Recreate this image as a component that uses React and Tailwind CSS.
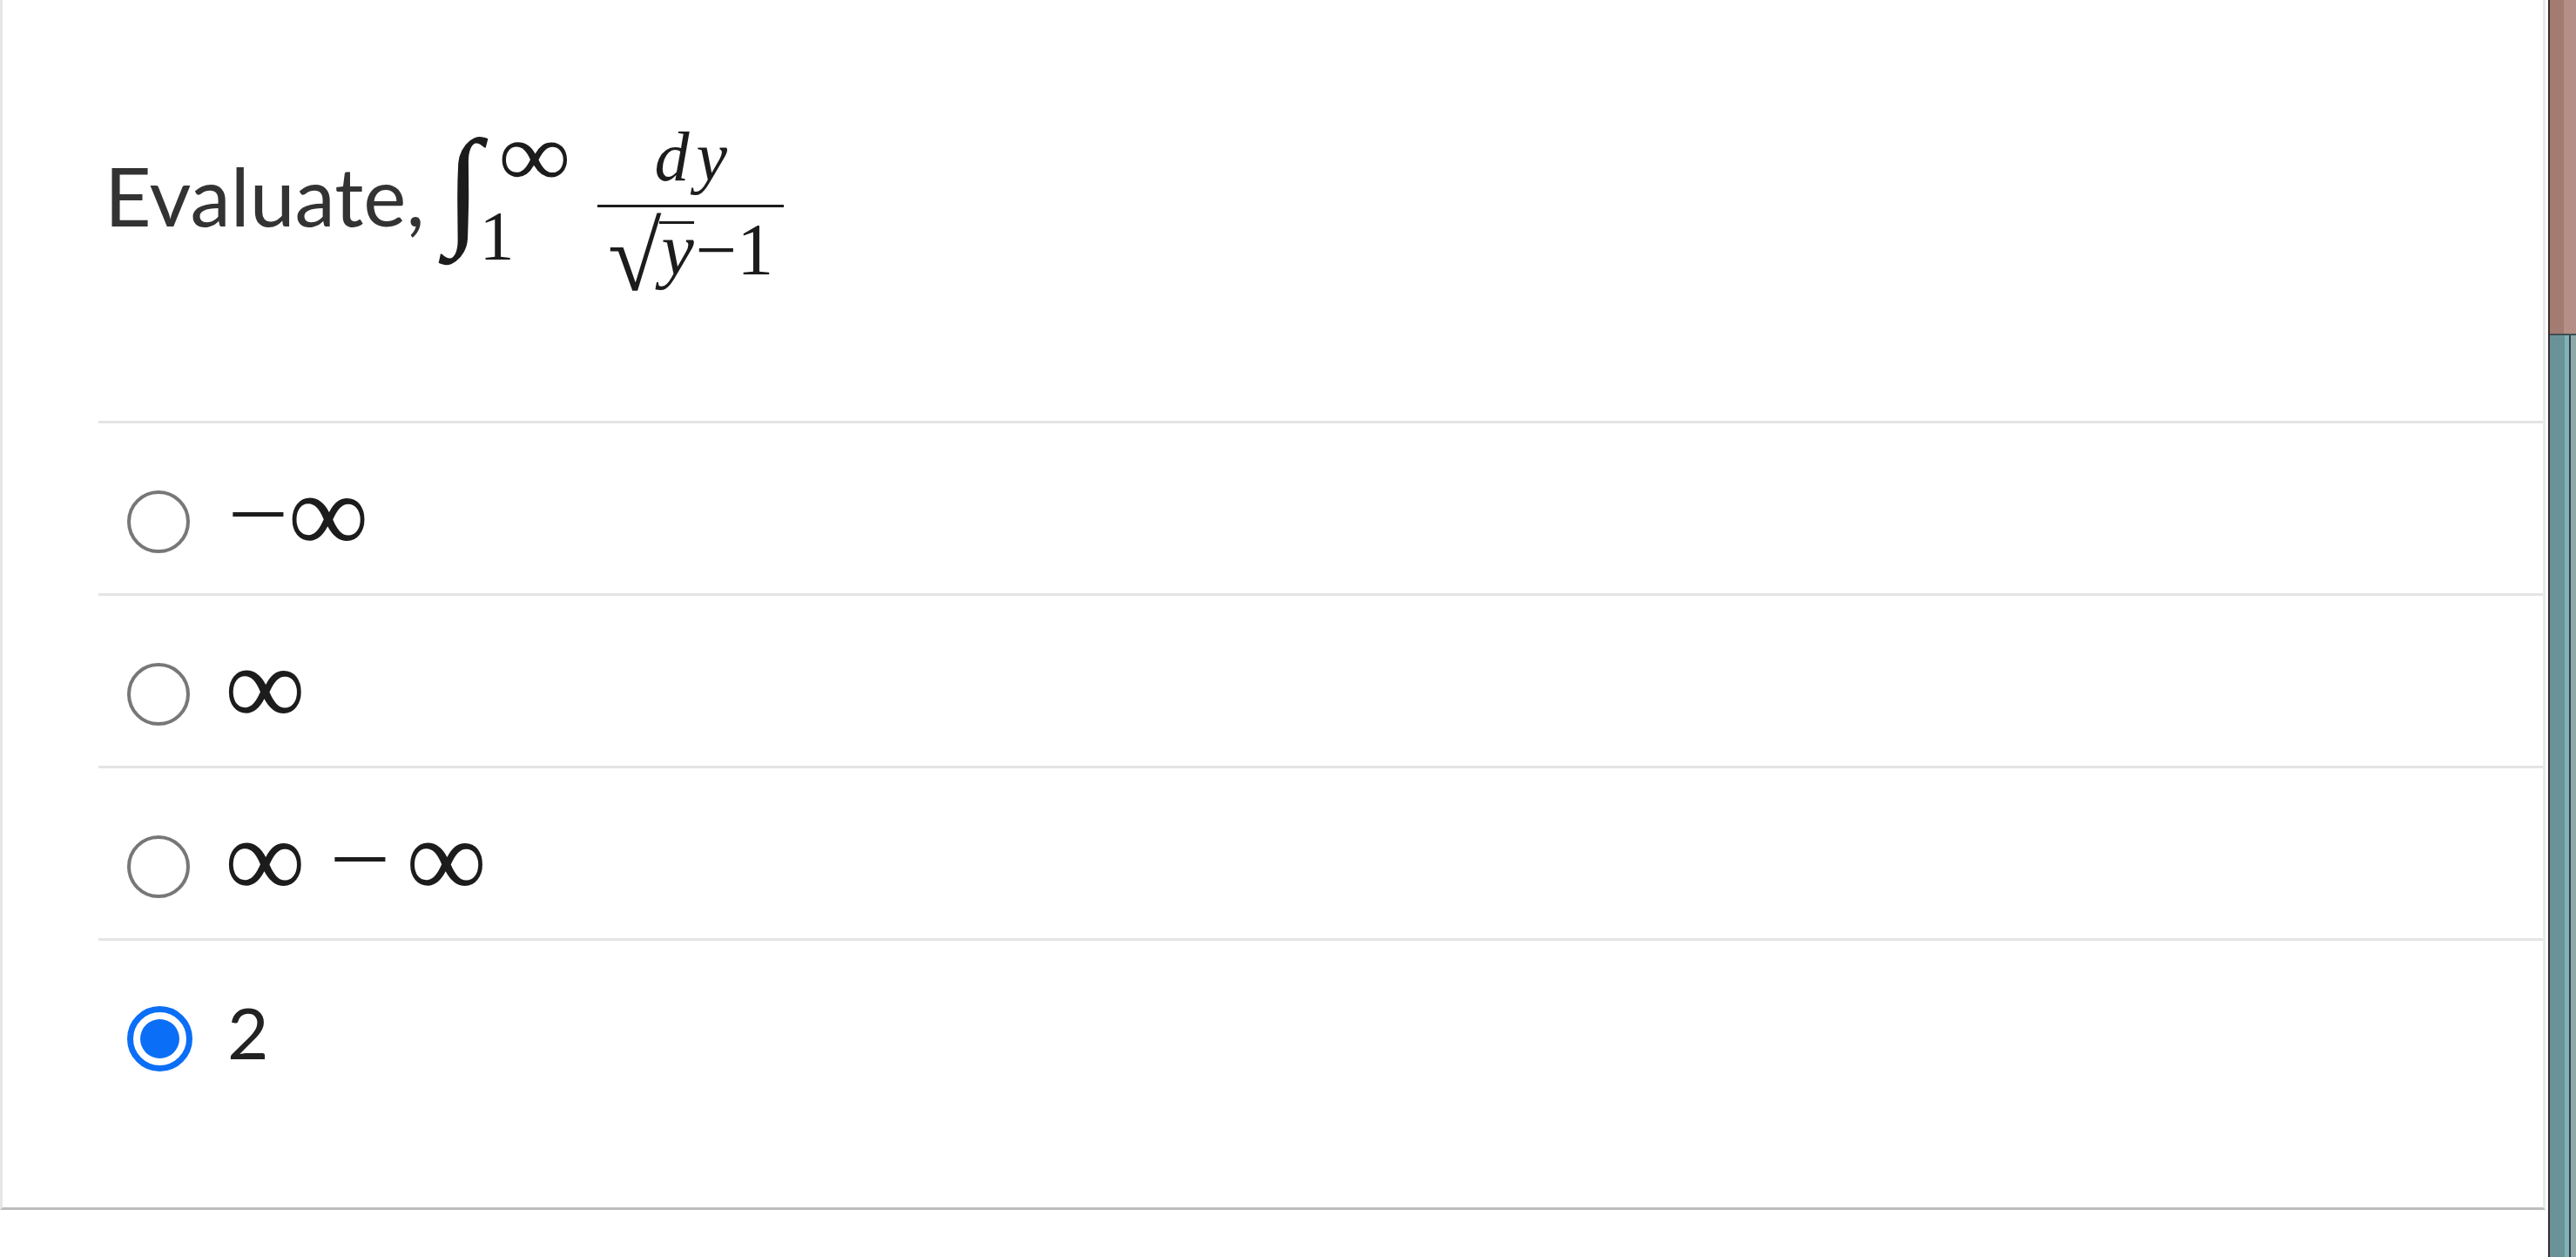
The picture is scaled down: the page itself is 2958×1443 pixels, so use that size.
import React from "react";

const answers = [
  { id: "a", parts: ["−", "∞"], unary: true },
  { id: "b", parts: ["∞"] },
  { id: "c", parts: ["∞", "−", "∞"] },
  { id: "d", plain: "2", selected: true },
];

function Radio({ selected }) {
  if (selected) {
    return (
      <span className="flex h-[75px] w-[75px] shrink-0 items-center justify-center rounded-full border-[7px] border-[#0b6ef6]">
        <span className="h-[45px] w-[45px] rounded-full bg-[#0b6ef6]" />
      </span>
    );
  }
  return (
    <span className="h-[72px] w-[72px] shrink-0 rounded-full border-[4px] border-[#777777]" />
  );
}

function MathAnswer({ parts, unary }) {
  return (
    <span className="flex -translate-y-[9px] items-center font-['Liberation_Serif',serif] text-[130px] leading-none text-[#1c1c1c]">
      {parts.map((p, i) =>
        p === "−" ? (
          <span
            key={i}
            className={
              "inline-block scale-x-[1.2] text-[104px] " +
              (unary ? "ml-[9px] mr-[5px]" : "ml-[33px] mr-[24px]")
            }
          >
            {p}
          </span>
        ) : (
          <span key={i}>{p}</span>
        )
      )}
    </span>
  );
}

function Question() {
  return (
    <div className="flex h-[483px] items-start pl-[117px] text-[#333333]">
      <span className="mt-[178px] font-['Lato',sans-serif] text-[93px] leading-none">
        Evaluate,
      </span>

      {/* integral with limits */}
      <span className="ml-[24px] flex items-start font-['Liberation_Serif',serif] text-[#1c1c1c]">
        <span className="mt-[138px] text-[150px] leading-none">∫</span>
        <span className="mt-[126px] flex flex-col items-start">
          <span className="ml-[23px] inline-block scale-x-[1.1] text-[106px] leading-none">
            ∞
          </span>
          <span className="-ml-[2px] -mt-[1px] text-[80px] leading-none">1</span>
        </span>
      </span>

      {/* fraction */}
      <span className="ml-[35px] mt-[140px] flex flex-col items-center font-['Liberation_Serif',serif] text-[#1c1c1c]">
        <span className="pl-[8px] text-[80px] italic leading-none tracking-[8px]">dy</span>
        <span className="mt-[15px] h-[3px] w-[214px] bg-[#1c1c1c]" />
        <span className="-mt-[17px] flex items-baseline text-[84px] leading-none">
          <span className="inline-block translate-y-[18px] text-[112px] leading-none">√</span>
          <span className="-ml-[3px] inline-block border-t-[3px] border-[#1c1c1c] pl-[3px] italic leading-[60px]">
            y
          </span>
          <span className="ml-[2px]">−1</span>
        </span>
      </span>
    </div>
  );
}

export default function App() {
  return (
    <div className="flex h-[1443px] w-[2958px] bg-white">
      <div className="flex flex-1 flex-col">
        <div className="h-[1389px] border-b-[3px] border-l-[3px] border-r-[3px] border-b-[#bdbdbd] border-l-[#e6e6e6] border-r-[#e9e9e9]">
          <Question />
          <div className="ml-[110px]">
            {answers.map((a) => (
              <div
                key={a.id}
                className="flex h-[198px] items-center border-t-[3px] border-[#e4e4e4] pl-[33px] pt-[30px]"
              >
                <Radio selected={a.selected} />
                <span className="ml-[40px]">
                  {a.plain ? (
                    <span className="block -translate-y-[9px] font-['Lato',sans-serif] text-[82px] leading-none text-[#222222]">
                      {a.plain}
                    </span>
                  ) : (
                    <MathAnswer parts={a.parts} unary={a.unary} />
                  )}
                </span>
              </div>
            ))}
          </div>
        </div>
      </div>
      <div className="ml-[3px] flex w-[32px] flex-col border-l-[2px] border-[#3a2b2a]">
        <div className="flex h-[383px]">
          <div className="w-[16px] bg-[#a27b71]" />
          <div className="flex-1 bg-[#b58e88]" />
        </div>
        <div className="flex flex-1 border-t-[2px] border-[#3d4f52]">
          <div className="w-[17px] bg-[#6a9399]" />
          <div className="w-[5px] bg-[#7fb3b9]" />
          <div className="w-[2px] bg-[#2f3f42]" />
          <div className="flex-1 bg-[#8ea7a9]" />
        </div>
      </div>
    </div>
  );
}
